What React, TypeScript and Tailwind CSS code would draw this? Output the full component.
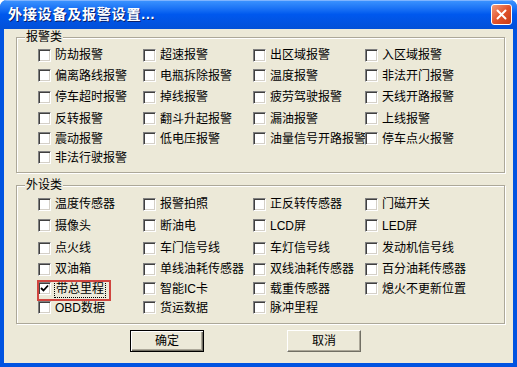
import React from 'react'

const alarmRows: string[][] = [
    ['防劫报警', '超速报警', '出区域报警', '入区域报警'],
    ['偏离路线报警', '电瓶拆除报警', '温度报警', '非法开门报警'],
    ['停车超时报警', '掉线报警', '疲劳驾驶报警', '天线开路报警'],
    ['反转报警', '翻斗升起报警', '漏油报警', '上线报警'],
    ['震动报警', '低电压报警', '油量信号开路报警', '停车点火报警'],
    ['非法行驶报警'],
]

const deviceRows: string[][] = [
    ['温度传感器', '报警拍照', '正反转传感器', '门磁开关'],
    ['摄像头', '断油电', 'LCD屏', 'LED屏'],
    ['点火线', '车门信号线', '车灯信号线', '发动机信号线'],
    ['双油箱', '单线油耗传感器', '双线油耗传感器', '百分油耗传感器'],
    ['带总里程', '智能IC卡', '载重传感器', '熄火不更新位置'],
    ['OBD数据', '货运数据', '脉冲里程'],
]

const font = {
    fontFamily: '"Liberation Sans", "Noto Sans CJK SC", sans-serif',
}

const Box: React.FC<{ checked?: boolean }> = ({ checked }) => (
    <span className="relative flex h-[13px] w-[13px] shrink-0 items-center justify-center border border-t-[#808080] border-l-[#808080] border-r-white border-b-white bg-white shadow-[inset_1px_1px_0_#404040,inset_-1px_-1px_0_#d4d0c8]">
        {checked && (
            <svg width="9" height="9" viewBox="0 0 9 9">
                <path
                    d="M1 4 L3.5 6.5 L8 1.5"
                    fill="none"
                    stroke="#000"
                    strokeWidth="1.8"
                />
            </svg>
        )}
    </span>
)

const Item: React.FC<{ label: string; checked?: boolean; marked?: boolean }> = ({
    label,
    checked,
    marked,
}) => (
    <label className="relative flex items-center gap-[4px] whitespace-nowrap">
        <Box checked={checked} />
        <span
            className={
                marked
                    ? 'px-[1px] leading-[16px] outline outline-1 outline-dotted outline-black'
                    : 'leading-[16px]'
            }
        >
            {label}
        </span>
        {marked && (
            <span className="pointer-events-none absolute -left-[1px] -top-[1px] h-[21px] w-[74px] border-2 border-[#d0453f]" />
        )}
    </label>
)

const Group: React.FC<{
    title: string
    rows: string[][]
    rowClass: string
    className: string
}> = ({ title, rows, rowClass, className }) => (
    <div
        className={`relative mx-[12px] w-[489px] border border-[#aca899] shadow-[1px_1px_0_#fff,inset_1px_1px_0_#fff] ${className}`}
    >
        <span className="absolute left-[8px] -top-[9px] bg-[#ece9d8] px-[1px] text-[12px] leading-[16px]">
            {title}
        </span>
        <div className={`grid grid-cols-[105px_110px_112px_100px] pl-[21px] ${rowClass}`}>
            {rows.map((row, r) =>
                [0, 1, 2, 3].map((c) => (
                    <div key={`${r}-${c}`} className="flex items-center">
                        {row[c] && (
                            <Item
                                label={row[c]}
                                checked={row[c] === '带总里程'}
                                marked={row[c] === '带总里程'}
                            />
                        )}
                    </div>
                ))
            )}
        </div>
    </div>
)

const App: React.FC = () => {
    return (
        <div className="h-[367px] w-[517px] overflow-hidden bg-white text-[12px] text-black" style={font}>
            <div className="flex h-full flex-col overflow-hidden rounded-t-[7px] bg-[#0053e1]">
                <div className="flex h-[29px] shrink-0 items-center justify-between bg-gradient-to-b from-[#3d95ff] via-[#0058ee] to-[#0250d8] pl-[8px] pr-[5px] shadow-[inset_0_1px_0_#7eb4ff]">
                    <span className="text-[14px] font-bold tracking-[0.8px] text-white [text-shadow:1px_1px_0_#0a1f6b]">
                        外接设备及报警设置...
                    </span>
                    <button className="flex h-[21px] w-[21px] items-center justify-center rounded-[3px] border border-white bg-gradient-to-br from-[#f09a7a] via-[#e2532c] to-[#c63b16]">
                        <svg width="11" height="11" viewBox="0 0 11 11">
                            <path
                                d="M1.5 1.5 L9.5 9.5 M9.5 1.5 L1.5 9.5"
                                stroke="#fff"
                                strokeWidth="2"
                                strokeLinecap="round"
                            />
                        </svg>
                    </button>
                </div>
                <div className="mx-[4px] mb-[4px] flex flex-1 flex-col bg-[#ece9d8] pt-[8px]">
                    <Group
                        title="报警类"
                        rows={alarmRows}
                        rowClass="grid-rows-[20px_21px_22px_21px_19px_19px] pt-[7px] pb-[5px]"
                        className=""
                    />
                    <Group
                        title="外设类"
                        rows={deviceRows}
                        rowClass="grid-rows-[20px_23px_22px_20px_19px_19px] pt-[8px] pb-[6px]"
                        className="mt-[12px]"
                    />
                    <div className="mt-[6px] flex pl-[126px]">
                        <button className="h-[22px] w-[74px] border border-black bg-[#ece9d8] shadow-[inset_1px_1px_0_#fff,inset_-1px_-1px_0_#716f64,inset_-2px_-2px_0_#aca899] text-[12px]">
                            确定
                        </button>
                        <button className="ml-[83px] h-[22px] w-[74px] border border-t-white border-l-white border-r-[#716f64] border-b-[#716f64] bg-[#ece9d8] shadow-[inset_-1px_-1px_0_#aca899] text-[12px]">
                            取消
                        </button>
                    </div>
                </div>
            </div>
        </div>
    )
}

export default App
